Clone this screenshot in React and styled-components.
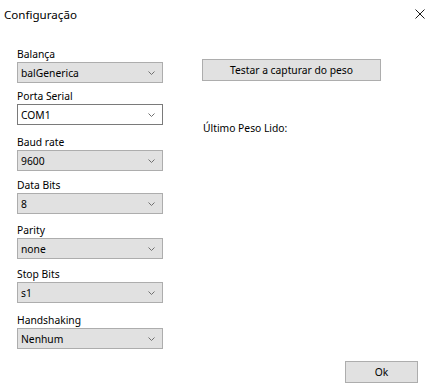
import React from "react";
import styled, { createGlobalStyle } from "styled-components";

const GlobalStyle = createGlobalStyle`
  html, body {
    margin: 0;
    padding: 0;
    background: #ffffff;
  }
  body {
    font-family: "Noto Sans", "Open Sans", sans-serif;
    font-size: 10.3px;
    color: #000000;
  }
`;

const fields = [
  { label: "Balança", value: "balGenerica", gap: 0 },
  { label: "Porta Serial", value: "COM1", gap: 6, editable: true },
  { label: "Baud rate", value: "9600", gap: 10 },
  { label: "Data Bits", value: "8", gap: 7 },
  { label: "Parity", value: "none", gap: 9 },
  { label: "Stop Bits", value: "s1", gap: 8 },
  { label: "Handshaking", value: "Nenhum", gap: 10 },
];

export default function App() {
  return (
    <>
      <GlobalStyle />
      <Window>
        <TitleBar>
          <Title>Configuração</Title>
          <CloseButton>
            <svg width="10" height="10" viewBox="0 0 10 10">
              <path d="M0.5 0.5 L9.5 9.5 M9.5 0.5 L0.5 9.5" stroke="#1a1a1a" strokeWidth="1" fill="none" />
            </svg>
          </CloseButton>
        </TitleBar>
        <Body>
          <LeftColumn>
            {fields.map((f) => (
              <Field key={f.label} $gap={f.gap}>
                <Label>{f.label}</Label>
                <Combo $editable={f.editable}>
                  <span>{f.value}</span>
                  <Chevron viewBox="0 0 7 4">
                    <path d="M0.5 0.5 L3.5 3.5 L6.5 0.5" stroke="#707070" strokeWidth="1" fill="none" />
                  </Chevron>
                </Combo>
              </Field>
            ))}
          </LeftColumn>
          <RightColumn>
            <Button $width={179}>Testar a capturar do peso</Button>
            <Reading>Último Peso Lido:</Reading>
          </RightColumn>
        </Body>
        <Footer>
          <Button $width={73}>Ok</Button>
        </Footer>
      </Window>
    </>
  );
}

const Window = styled.div`
  width: 437px;
  height: 385px;
  display: flex;
  flex-direction: column;
  background: #ffffff;
  overflow: hidden;
`;

const TitleBar = styled.div`
  height: 30px;
  display: flex;
  align-items: center;
  justify-content: space-between;
  padding-left: 4px;
`;

const Title = styled.div`
  font-size: 11.6px;
  margin-top: -2px;
`;

const CloseButton = styled.div`
  width: 34px;
  height: 30px;
  display: flex;
  align-items: center;
  justify-content: center;
  margin-top: -2px;
`;

const Body = styled.div`
  display: flex;
  padding-left: 17px;
  padding-top: 17px;
  flex: 1;
`;

const LeftColumn = styled.div`
  width: 146px;
  display: flex;
  flex-direction: column;
`;

const Field = styled.div`
  display: flex;
  flex-direction: column;
  margin-top: ${(p) => p.$gap}px;
`;

const Label = styled.div`
  height: 15px;
  line-height: 14px;
  white-space: nowrap;
`;

const Combo = styled.div`
  box-sizing: border-box;
  height: 21px;
  display: flex;
  align-items: center;
  justify-content: space-between;
  padding: 0 7px 0 3px;
  background: ${(p) => (p.$editable ? "#ffffff" : "#e1e1e1")};
  border: 1px solid ${(p) => (p.$editable ? "#7a7a7a" : "#adadad")};
`;

const Chevron = styled.svg`
  width: 7px;
  height: 4px;
`;

const RightColumn = styled.div`
  margin-left: 39px;
  padding-top: 12px;
  display: flex;
  flex-direction: column;
  align-items: flex-start;
`;

const Button = styled.div`
  box-sizing: border-box;
  width: ${(p) => p.$width}px;
  height: 22px;
  display: flex;
  align-items: center;
  justify-content: center;
  background: #e1e1e1;
  border: 1px solid #adadad;
`;

const Reading = styled.div`
  margin-top: 40px;
  margin-left: 1px;
  line-height: 15px;
`;

const Footer = styled.div`
  display: flex;
  justify-content: flex-end;
  padding: 0 19px 2px 0;
`;
